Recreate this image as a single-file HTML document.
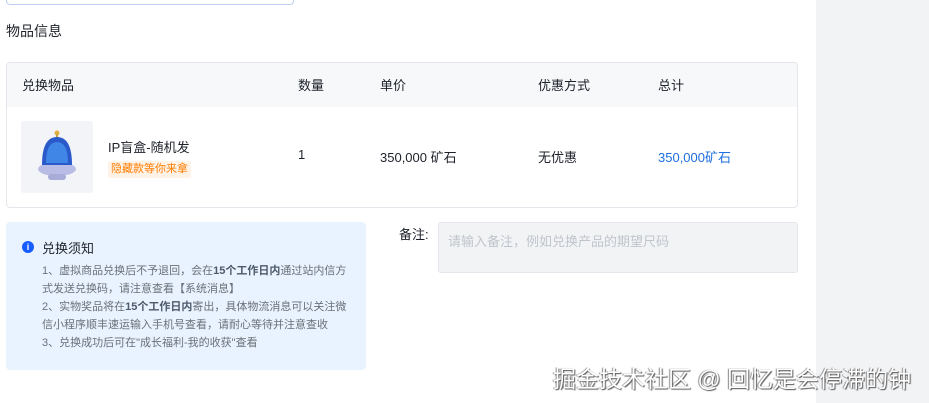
<!DOCTYPE html>
<html><head><meta charset="utf-8"><style>
*{margin:0;padding:0;box-sizing:border-box}
body{width:929px;height:403px;overflow:hidden;background:#fff;font-family:"Liberation Sans","Noto Sans CJK SC",sans-serif;color:#1d2129;position:relative;font-size:13px}
.a{position:absolute;white-space:nowrap}
</style></head><body>
<div class="a" style="left:816px;top:0;width:113px;height:403px;background:#f2f3f5"></div>
<div class="a" style="left:6px;top:-10px;width:288px;height:15px;border:1px solid #bfd0f5;border-radius:4px"></div>
<div class="a" style="left:6px;top:21px;font-size:14px;color:#1d2129">物品信息</div>
<div class="a" style="left:6px;top:62px;width:792px;height:146px;border:1px solid #e5e6eb;border-radius:4px;overflow:hidden">
 <div style="height:44px;background:#f7f8fa"></div>
</div>
<div class="a" style="left:22px;top:75px">兑换物品</div>
<div class="a" style="left:298px;top:75px">数量</div>
<div class="a" style="left:380px;top:75px">单价</div>
<div class="a" style="left:538px;top:75px">优惠方式</div>
<div class="a" style="left:658px;top:75px">总计</div>
<div class="a" style="left:21px;top:121px;width:72px;height:72px;background:#f3f4f7;border-radius:3px">
 <svg width="72" height="72" viewBox="0 0 72 72">
  <circle cx="36" cy="12" r="2.5" fill="#e0b040"/>
  <rect x="35" y="13" width="2" height="4" fill="#c9a040"/>
  <ellipse cx="36" cy="48" rx="19" ry="7" fill="#b9bde6"/>
  <path d="M21 44 Q21 16 36 16 Q51 16 51 44 Z" fill="#2a59c9"/>
  <path d="M25 42 Q25 21 36 21 Q47 21 47 42 Z" fill="#3f86e6"/>
  <rect x="27" y="53" width="18" height="6" rx="3" fill="#a7acd8"/>
 </svg>
</div>
<div class="a" style="left:108px;top:137px">IP盲盒-随机发</div>
<div class="a" style="left:108px;top:161px;padding:0 3px;height:17px;background:#fff3e8;color:#ff7d00;font-size:11px;line-height:17px;border-radius:2px">隐藏款等你来拿</div>
<div class="a" style="left:298px;top:147px">1</div>
<div class="a" style="left:380px;top:147px">350,000 矿石</div>
<div class="a" style="left:538px;top:147px">无优惠</div>
<div class="a" style="left:658px;top:147px;color:#1e6fe0">350,000矿石</div>
<div class="a" style="left:6px;top:222px;width:360px;height:148px;background:#e8f3ff;border-radius:4px"></div>
<div class="a" style="left:22px;top:241px;width:12px;height:12px;border-radius:50%;background:#165dff;color:#fff;font-size:9px;line-height:12px;text-align:center;font-weight:bold">i</div>
<div class="a" style="left:42px;top:238px;font-size:13px">兑换须知</div>
<div class="a" style="left:42px;top:262px;width:305px;white-space:normal;font-size:11px;line-height:18px;color:#6b7078">1、虚拟商品兑换后不予退回，会在<b style="color:#4e5969">15个工作日内</b>通过站内信方式发送兑换码，请注意查看【系统消息】<br>2、实物奖品将在<b style="color:#4e5969">15个工作日内</b>寄出，具体物流消息可以关注微信小程序顺丰速运输入手机号查看，请耐心等待并注意查收<br>3、兑换成功后可在"成长福利-我的收获"查看</div>
<div class="a" style="left:399px;top:224px">备注:</div>
<div class="a" style="left:438px;top:222px;width:360px;height:51px;background:#f2f3f5;border:1px solid #e5e6eb;border-radius:3px;padding:8px 9px;color:#c0c4cc">请输入备注，例如兑换产品的期望尺码</div>
<div class="a" style="left:553px;top:360px;font-size:23px;color:#fff;text-shadow:1px 1px 1px #555,-1px 0 1px #888">掘金技术社区 @ 回忆是会停滞的钟</div>
</body></html>
